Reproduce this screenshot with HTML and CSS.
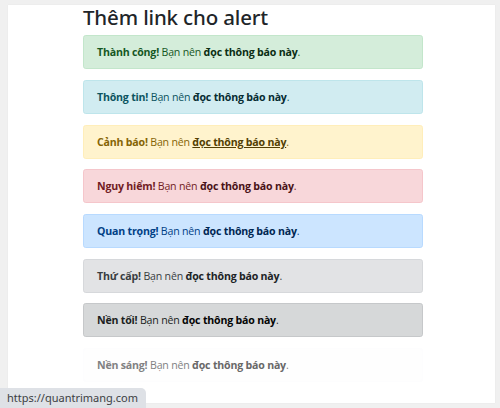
FILE: index.html
```html
<!DOCTYPE html>
<html lang="vi">
<head>
<meta charset="utf-8">
<link rel="stylesheet" href="styles.css">
</head>
<body>
<div class="frame">
  <div class="page">
    <div class="container">
      <h2 class="title">Thêm link cho alert</h2>
      <div class="alert alert-success"><strong>Thành công!</strong> Bạn nên <a href="#" class="alert-link">đọc thông báo này</a>.</div>
      <div class="alert alert-info"><strong>Thông tin!</strong> Bạn nên <a href="#" class="alert-link">đọc thông báo này</a>.</div>
      <div class="alert alert-warning"><strong>Cảnh báo!</strong> Bạn nên <a href="#" class="alert-link hover">đọc thông báo này</a>.</div>
      <div class="alert alert-danger"><strong>Nguy hiểm!</strong> Bạn nên <a href="#" class="alert-link">đọc thông báo này</a>.</div>
      <div class="alert alert-primary"><strong>Quan trọng!</strong> Bạn nên <a href="#" class="alert-link">đọc thông báo này</a>.</div>
      <div class="alert alert-secondary"><strong>Thứ cấp!</strong> Bạn nên <a href="#" class="alert-link">đọc thông báo này</a>.</div>
      <div class="alert alert-dark"><strong>Nền tối!</strong> Bạn nên <a href="#" class="alert-link">đọc thông báo này</a>.</div>
      <div class="alert alert-light"><strong>Nền sáng!</strong> Bạn nên <a href="#" class="alert-link">đọc thông báo này</a>.</div>
    </div>
  </div>
</div>
<div class="status">https://quantrimang.com</div>
</body>
</html>
```
FILE: styles.css
```css
html, body {
  margin: 0;
  height: 100%;
  overflow: hidden;
}
body {
  background: #f0f0f0;
  font-family: "Open Sans", "Noto Sans", sans-serif;
}
.frame {
  height: 100%;
  box-sizing: border-box;
  padding: 5px 5px 5px 8px;
  border-left: 3px solid #e6e6e6;
  margin-left: -3px;
}
.page {
  background: #ffffff;
  height: 100%;
  box-shadow: 0 0 1px rgba(0,0,0,0.08);
}
.container {
  padding-left: 75px;
  width: 340px;
}
.title {
  margin: 0 0 4.8px 0;
  font-size: 20.5px;
  line-height: 25.5px;
  font-weight: 500;
  color: #212529;
  font-family: "Noto Sans", "Open Sans", sans-serif;
  letter-spacing: -0.15px;
}
.alert {
  padding: 8px 13px;
  font-size: 10.6px;
  line-height: 16px;
  border: 1px solid transparent;
  border-radius: 2.7px;
  margin-bottom: 10.7px;
  letter-spacing: -0.2px;
}
.alert strong { font-weight: 700; }
.alert-link {
  font-weight: 700;
  text-decoration: none;
}
.alert-link.hover { text-decoration: underline; }
.alert-success { background: #d4edda; border-color: #c3e6cb; color: #155724; }
.alert-success .alert-link { color: #0b2e13; }
.alert-info { background: #d1ecf1; border-color: #bee5eb; color: #0c5460; }
.alert-info .alert-link { color: #062c33; }
.alert-warning { background: #fff3cd; border-color: #ffeeba; color: #856404; }
.alert-warning .alert-link { color: #533f03; }
.alert-danger { background: #f8d7da; border-color: #f5c6cb; color: #721c24; }
.alert-danger .alert-link { color: #491217; }
.alert-primary { background: #cce5ff; border-color: #b8daff; color: #004085; }
.alert-primary .alert-link { color: #002752; }
.alert-secondary { background: #e2e3e5; border-color: #d6d8db; color: #383d41; }
.alert-secondary .alert-link { color: #202326; }
.alert-dark { background: #d6d8d9; border-color: #c6c8ca; color: #1b1e21; }
.alert-dark .alert-link { color: #040505; }
.alert-light { background: #fefefe; border-color: #fdfdfe; color: #818182; }
.alert-light .alert-link { color: #686868; }
.status {
  position: absolute;
  left: 0;
  bottom: 0;
  height: 20px;
  line-height: 20px;
  padding: 0 8px 0 7px;
  background: #dee1e6;
  border-top-right-radius: 5px;
  color: #3c4043;
  font-size: 11px;
  font-family: "Noto Sans", "Open Sans", sans-serif;
}
```
